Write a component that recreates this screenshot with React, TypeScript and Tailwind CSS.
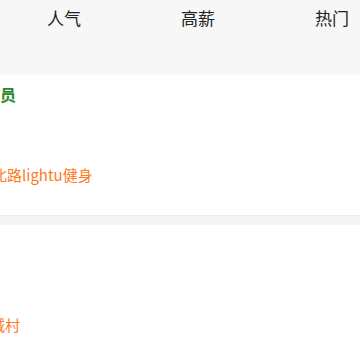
const tabs = ['人气', '高薪', '热门'];

export default function App() {
  return (
    <div className="w-[360px] h-[360px] overflow-hidden bg-white font-['Noto_Sans_CJK_SC',sans-serif]">
      <div className="h-[75px] bg-[#f7f7f7]">
        <div className="flex -ml-[3px] h-[36px] items-center">
          {tabs.map((t) => (
            <div key={t} className="w-[134px] shrink-0 text-center text-[17px] text-[#222]">
              {t}
            </div>
          ))}
        </div>
      </div>

      <div className="h-[140px] overflow-hidden">
        <div className="h-[38px] flex items-center text-[16px] font-bold text-[#2a8a2a]">
          <span>员</span>
        </div>
        <div className="mt-[43px] h-[38px] flex items-center text-[15px] text-[#ff7a1f] whitespace-nowrap">
          <span className="-ml-[8px]">北路lightu健身</span>
        </div>
      </div>

      <div className="h-[10px] bg-[#f4f4f4] border-t border-[#ececec]" />

      <div className="h-[135px] overflow-hidden">
        <div className="h-[38px]" />
        <div className="mt-[43px] h-[38px] flex items-center text-[15px] text-[#ff7a1f] whitespace-nowrap">
          <span className="-ml-[10px]">城村</span>
        </div>
      </div>
    </div>
  );
}
